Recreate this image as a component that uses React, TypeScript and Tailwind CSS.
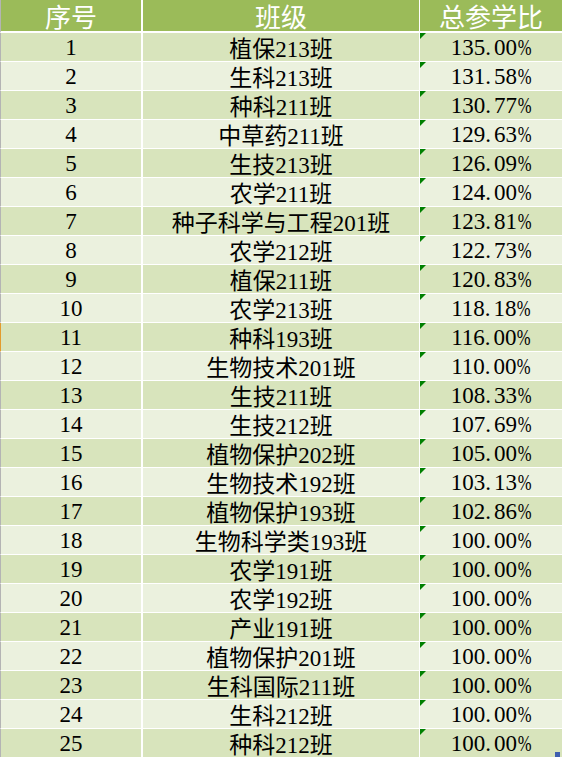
import React from "react";

const rows: [string, string][] = [
  ["植保213班", "135.00"],
  ["生科213班", "131.58"],
  ["种科211班", "130.77"],
  ["中草药211班", "129.63"],
  ["生技213班", "126.09"],
  ["农学211班", "124.00"],
  ["种子科学与工程201班", "123.81"],
  ["农学212班", "122.73"],
  ["植保211班", "120.83"],
  ["农学213班", "118.18"],
  ["种科193班", "116.00"],
  ["生物技术201班", "110.00"],
  ["生技211班", "108.33"],
  ["生技212班", "107.69"],
  ["植物保护202班", "105.00"],
  ["生物技术192班", "103.13"],
  ["植物保护193班", "102.86"],
  ["生物科学类193班", "100.00"],
  ["农学191班", "100.00"],
  ["农学192班", "100.00"],
  ["产业191班", "100.00"],
  ["植物保护201班", "100.00"],
  ["生科国际211班", "100.00"],
  ["生科212班", "100.00"],
  ["种科212班", "100.00"],
];

function Mixed({ text }: { text: string }) {
  const parts = text.match(/[0-9.]+|[^0-9.]+/g) || [];
  return (
    <>
      {parts.map((p, k) =>
        /^[0-9.]+$/.test(p) ? (
          <span key={k} className="font-['Liberation_Serif',serif]">
            {p}
          </span>
        ) : (
          <span key={k} className="font-['Noto_Sans_CJK_SC',sans-serif]">
            {p}
          </span>
        )
      )}
    </>
  );
}

export default function App() {
  return (
    <div className="relative h-[757px] w-[562px] overflow-hidden bg-white text-black">
      <div className="flex h-[33px] border-b-2 border-l border-b-white border-l-[#b4b4b4] bg-[#9BBB59] font-['Noto_Sans_CJK_SC',sans-serif] text-[26px] leading-[30px] text-white">
        <div className="flex w-[142px] justify-center border-r-2 border-white pt-[1px]">序号</div>
        <div className="flex w-[277px] justify-center border-r border-white pt-[1px]">班级</div>
        <div className="flex flex-1 justify-center pt-[1px]">总参学比</div>
      </div>
      {rows.map(([name, pct], i) => {
        const bg = i % 2 === 0 ? "bg-[#D8E4BC]" : "bg-[#EBF1DE]";
        const left = i === 10 ? "border-l-[#E39B2D]" : "border-l-[#b4b4b4]";
        const dot = pct.indexOf(".");
        return (
          <div
            key={i}
            className={`flex h-[29px] border-b border-l border-b-white ${left} ${bg} font-['Liberation_Serif',serif] text-[23px] leading-[27px]`}
          >
            <div className="flex w-[142px] justify-center border-r-2 border-white pt-[1px]">
              <span>{i + 1}</span>
            </div>
            <div className="flex w-[277px] justify-center border-r border-white pt-[1px] whitespace-nowrap">
              <span>
                <Mixed text={name} />
              </span>
            </div>
            <div className="relative flex flex-1 justify-center pt-[1px] whitespace-nowrap">
              <span className="absolute left-0 top-0 h-0 w-0 border-t-[6px] border-r-[6px] border-t-[#008000] border-r-transparent" />
              <span>
                {pct.slice(0, dot)}
                <span className="mr-[3px]">.</span>
                {pct.slice(dot + 1)}
                <span className="mx-[-2.5px] inline-block scale-x-[0.72]">%</span>
              </span>
            </div>
          </div>
        );
      })}
      <div className="absolute bottom-0 right-[2px] h-[5px] w-[5px] bg-[#3F5FAF]" />
    </div>
  );
}
